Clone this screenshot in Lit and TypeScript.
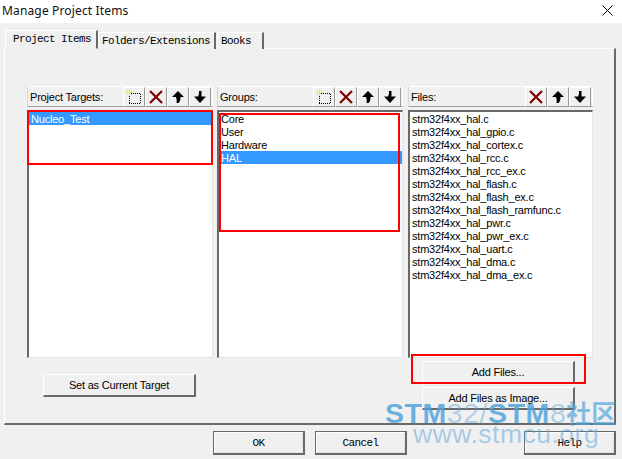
import { LitElement, html, css, svg } from "lit";
import { customElement } from "lit/decorators.js";

const dots: string[] = [];
for (let i = 0; i < 12; i += 2) { dots.push(`M${3 + i} 4h1M${3 + i} 14h1`); }
for (let i = 0; i < 10; i += 2) { dots.push(`M3 ${5 + i}h1M14 ${5 + i}h1`); }
const newIcon = svg`<svg width="16" height="16" viewBox="0 0 16 16" shape-rendering="crispEdges"><path d="${dots.join("")}" transform="translate(0 0.5)" stroke="#000" fill="none"/><path d="M3 0h1v7h-1zM0 3h7v1h-7zM1 1h1v1h-1zM5 1h1v1h-1zM1 5h1v1h-1zM5 5h1v1h-1z" fill="#f2e63c"/></svg>`;
const delIcon = svg`<svg width="14" height="14" viewBox="0 0 14 14"><path d="M1 1l12 12M13 1L1 13" stroke="#800000" stroke-width="2.2" fill="none"/></svg>`;
const upIcon = svg`<svg width="12" height="12" viewBox="0 0 12 12"><path d="M6 0L12 6H8.5C8.5 8 8.5 10 6.5 12H4.5C5 10 4.5 8 4 6H0Z" fill="#000"/></svg>`;
const downIcon = svg`<svg width="12" height="12" viewBox="0 0 12 12"><path d="M5 0H7.5V5.5H12L6 12L0 5.5H4C5 4 5 2 5 0Z" fill="#000"/></svg>`;

const FILES = ["stm32f4xx_hal.c","stm32f4xx_hal_gpio.c","stm32f4xx_hal_cortex.c","stm32f4xx_hal_rcc.c","stm32f4xx_hal_rcc_ex.c","stm32f4xx_hal_flash.c","stm32f4xx_hal_flash_ex.c","stm32f4xx_hal_flash_ramfunc.c","stm32f4xx_hal_pwr.c","stm32f4xx_hal_pwr_ex.c","stm32f4xx_hal_uart.c","stm32f4xx_hal_dma.c","stm32f4xx_hal_dma_ex.c"];

@customElement("app-root")
export class AppRoot extends LitElement {
  static styles = css`
    :host { display: block; position: relative; width: 622px; height: 459px; overflow: hidden; background: #f0f0f0;
      font-family: "Liberation Sans", Arial, sans-serif; font-size: 11px; letter-spacing: -0.2px; color: #000; }
    .title { height: 23px; background: #fff; display: flex; align-items: center; justify-content: space-between; padding: 0 9px 2px 2px; box-sizing: border-box; }
    .title span { font-family: "Noto Sans", sans-serif; font-size: 12px; letter-spacing: 0.15px; color: #111; }
    .close { display: block; }
    .main { padding: 7px 6px 0 4px; }
    .tabs { display: flex; align-items: flex-end; height: 19px; padding-left: 1px; position: relative; z-index: 1; margin-bottom: -1px; }
    .tab { font-family: "Liberation Mono", monospace; font-size: 11px; letter-spacing: -0.6px; box-sizing: border-box; height: 17px; display: flex; align-items: center;
      border-top: 1px solid #fff; border-left: 1px solid #fff; border-right: 2px solid #696969; padding-left: 3px; background: #f0f0f0; }
    .tab.active { height: 19px; padding: 0 0 2px 7px; width: 93px; border-bottom: 1px solid #f0f0f0; }
    .t2 { width: 118px; }
    .t3 { width: 47px; margin-left: 1px; }
    .page { box-sizing: border-box; height: 377px; border-top: 1px solid #fff; border-left: 1px solid #fff; border-right: 2px solid #696969; border-bottom: 2px solid #696969; padding: 37px 0 0 22px; }
    .grid { display: grid; grid-template-columns: 186px 186px 186px; column-gap: 4px; }
    .c3 { margin-left: 1px; }
    .phead { box-sizing: border-box; height: 21px; display: flex; align-items: center; justify-content: space-between; padding-left: 2px; padding-right: 1px; border-top: 1px solid #fff; border-right: 1px solid #fff; border-bottom: 1px solid #a0a0a0; border-left: 1px solid #d8d8d8; }
    .tools { display: flex; }
    .tbtn { box-sizing: border-box; width: 22px; height: 20px; display: flex; align-items: center; justify-content: center; border-top: 1px solid #fff; border-left: 1px solid #fff; border-right: 1px solid #9a9a9a; border-bottom: 1px solid #9a9a9a; }
    .list { box-sizing: border-box; height: 248px; margin-top: 3px; background: #fff; border-top: 2px solid #696969; border-left: 2px solid #696969; border-right: 1px solid #e3e3e3; border-bottom: 1px solid #e3e3e3; }
    .row { height: 13px; line-height: 15px; padding-left: 2px; white-space: nowrap; }
    .row.sel { background: #3399ff; color: #fff; }
    .btn { box-sizing: border-box; display: flex; align-items: center; justify-content: center; width: 153px; height: 23px; background: #f0f0f0; border-top: 1px solid #fff; border-left: 1px solid #fff; border-right: 2px solid #696969; border-bottom: 2px solid #696969; }
    .setb { margin: 16px 0 0 16px; }
    .rb { margin: 3px 0 0 15px; display: flex; flex-direction: column; gap: 3px; }
    .foot { display: flex; padding: 6px 0 0 209px; }
    .fbtn { box-sizing: border-box; width: 92px; height: 24px; display: flex; align-items: center; justify-content: center; font-family: "Liberation Mono", monospace; font-size: 11px; letter-spacing: -0.6px;
      border: 1px solid #696969; border-right-width: 2px; border-bottom-width: 2px; box-shadow: inset 1px 1px 0 #fff, inset -1px -1px 0 #e3e3e3; margin-right: 10px; }
    .help { margin: 0 0 0 107px; }
    .red { position: absolute; box-sizing: border-box; border: 2px solid #f00; pointer-events: none; }
    .r1 { left: 27px; top: 110px; width: 186px; height: 55px; }
    .r2 { left: 219px; top: 113px; width: 181px; height: 119px; }
    .r3 { left: 411px; top: 354px; width: 175px; height: 30px; }
    .wm { position: absolute; pointer-events: none; white-space: nowrap; }
    .wm1 { left: 385px; top: 396px; font-size: 28.5px; line-height: 32px; letter-spacing: 0.55px; color: rgba(90, 165, 220, 0.45); }
    .wm1 b { color: rgba(80, 165, 220, 0.85); }
    .wm1 i { font-style: normal; font-family: "Noto Sans CJK SC", sans-serif; font-weight: 700; font-size: 25px; letter-spacing: 0; color: rgba(80, 165, 220, 0.7); }
    .wm2 { left: 413px; top: 419px; font-size: 26.5px; line-height: 30px; letter-spacing: 0.5px; color: rgba(90, 165, 220, 0.5); }
  `;

  private panel(label: string, tools: unknown[], rows: string[], sel: number, cls = "") {
    return html`<div class=${cls}>
      <div class="phead"><span>${label}</span><div class="tools">${tools.map((t) => html`<div class="tbtn">${t}</div>`)}</div></div>
      <div class="list">${rows.map((r, i) => html`<div class="row ${i === sel ? "sel" : ""}">${r}</div>`)}</div>
    </div>`;
  }

  render() {
    return html`
      <div class="title"><span>Manage Project Items</span>
        <svg class="close" width="11" height="11" viewBox="0 0 11 11"><path d="M0.5 0.5l10 10M10.5 0.5l-10 10" stroke="#000" fill="none"/></svg>
      </div>
      <div class="main">
        <div class="tabs">
          <div class="tab active">Project Items</div>
          <div class="tab t2">Folders/Extensions</div>
          <div class="tab t3">Books</div>
        </div>
        <div class="page">
          <div class="grid">
            ${this.panel("Project Targets:", [newIcon, delIcon, upIcon, downIcon], ["Nucleo_Test"], 0)}
            ${this.panel("Groups:", [newIcon, delIcon, upIcon, downIcon], ["Core", "User", "Hardware", "HAL"], 3)}
            ${this.panel("Files:", [delIcon, upIcon, downIcon], FILES, -1, "c3")}
            <div><div class="btn setb">Set as Current Target</div></div>
            <div></div>
            <div class="c3 rb"><div class="btn">Add Files...</div><div class="btn">Add Files as Image...</div></div>
          </div>
        </div>
        <div class="foot">
          <div class="fbtn">OK</div><div class="fbtn">Cancel</div><div class="fbtn help">Help</div>
        </div>
      </div>
      <div class="red r1"></div><div class="red r2"></div><div class="red r3"></div>
      <div class="wm wm1"><b>STM</b>32/<b>STM</b>8<i>社区</i></div>
      <div class="wm wm2">www.stmcu.org</div>
    `;
  }
}
